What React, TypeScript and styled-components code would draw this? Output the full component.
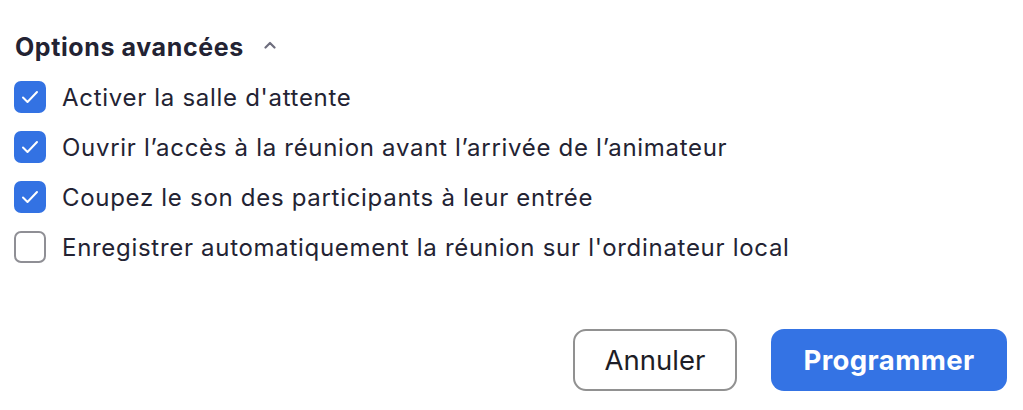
import React, { useState } from "react";
import styled, { createGlobalStyle } from "styled-components";

const Global = createGlobalStyle`
  html, body { margin: 0; padding: 0; background: #ffffff; }
  body { font-family: Inter, "Noto Sans", sans-serif; -webkit-font-smoothing: antialiased; }
`;

const Page = styled.div`
  width: 1023px;
  height: 410px;
  box-sizing: border-box;
  padding: 32px 16px 0 14px;
  display: flex;
  flex-direction: column;
`;

const Header = styled.div`
  display: flex;
  align-items: center;
  gap: 20px;
  height: 30px;
  margin-bottom: 19px;
`;

const Title = styled.h2`
  margin: 0 0 0 1px;
  font-size: 25px;
  line-height: 30px;
  font-weight: 700;
  color: #232333;
  letter-spacing: 0.6px;
`;

const ChevronWrap = styled.span`
  display: flex;
  margin-bottom: 4px;
`;

const List = styled.div`
  display: flex;
  flex-direction: column;
  gap: 18px;
`;

const Row = styled.label`
  display: flex;
  align-items: center;
  gap: 16px;
  height: 32px;
  cursor: pointer;
`;

const Box = styled.span<{ $checked: boolean }>`
  width: 32px;
  height: 32px;
  box-sizing: border-box;
  border-radius: 7px;
  flex-shrink: 0;
  display: flex;
  align-items: center;
  justify-content: center;
  background: ${(p) => (p.$checked ? "#3372e3" : "#ffffff")};
  border: ${(p) => (p.$checked ? "none" : "2px solid #8f8f95")};
`;

const Label = styled.span`
  font-size: 24px;
  letter-spacing: 0.7px;
  color: #232333;
`;

const Footer = styled.div`
  margin-top: auto;
  margin-bottom: 19px;
  display: flex;
  justify-content: flex-end;
  gap: 34px;
`;

const Button = styled.button<{ $primary?: boolean }>`
  height: 62px;
  box-sizing: border-box;
  border-radius: 13px;
  font-family: Inter, "Noto Sans", sans-serif;
  font-size: 27.5px;
  cursor: pointer;
  padding: 0;
  width: ${(p) => (p.$primary ? "236px" : "164px")};
  font-weight: ${(p) => (p.$primary ? 700 : 400)};
  letter-spacing: ${(p) => (p.$primary ? "0.4px" : "0")};
  color: ${(p) => (p.$primary ? "#ffffff" : "#1d1d26")};
  background: ${(p) => (p.$primary ? "#3473e4" : "#ffffff")};
  border: ${(p) => (p.$primary ? "none" : "2px solid #919191")};
`;

const Check = () => (
  <svg width="18" height="14" viewBox="0 0 18 14" fill="none">
    <path d="M2 7.5 L6.5 12 L16 2" stroke="#ffffff" strokeWidth="2" strokeLinecap="round" strokeLinejoin="round" />
  </svg>
);

const Chevron = () => (
  <svg width="12" height="8" viewBox="0 0 12 8" fill="none">
    <path d="M1.5 6.5 L6 2 L10.5 6.5" stroke="#6e6e7e" strokeWidth="2.2" strokeLinecap="round" strokeLinejoin="round" />
  </svg>
);

const options = [
  { text: "Activer la salle d'attente", checked: true },
  { text: "Ouvrir l\u2019accès à la réunion avant l\u2019arrivée de l\u2019animateur", checked: true },
  { text: "Coupez le son des participants à leur entrée", checked: true },
  { text: "Enregistrer automatiquement la réunion sur l'ordinateur local", checked: false },
];

export default function App() {
  const [state, setState] = useState(options.map((o) => o.checked));
  return (
    <>
      <Global />
      <Page>
        <Header>
          <Title>Options avancées</Title>
          <ChevronWrap>
            <Chevron />
          </ChevronWrap>
        </Header>
        <List>
          {options.map((o, i) => (
            <Row key={i} onClick={() => setState((s) => s.map((v, j) => (j === i ? !v : v)))}>
              <Box $checked={state[i]}>{state[i] && <Check />}</Box>
              <Label>{o.text}</Label>
            </Row>
          ))}
        </List>
        <Footer>
          <Button>Annuler</Button>
          <Button $primary>Programmer</Button>
        </Footer>
      </Page>
    </>
  );
}
